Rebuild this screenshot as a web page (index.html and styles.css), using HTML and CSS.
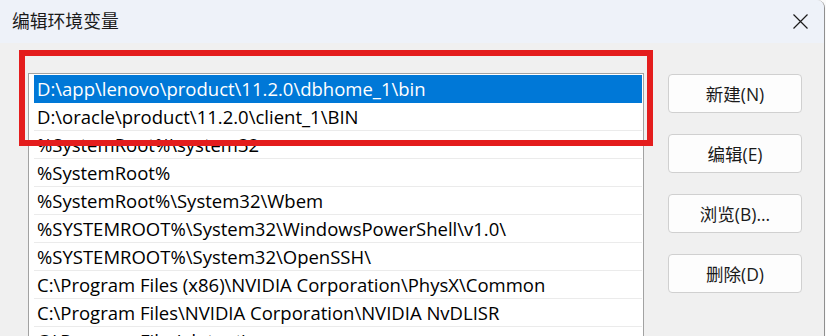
FILE: index.html
```
<!DOCTYPE html>
<html lang="zh-CN">
<head>
<meta charset="utf-8">
<title>编辑环境变量</title>
<link rel="stylesheet" href="styles.css">
</head>
<body>
<div class="window">
  <div class="titlebar">
    <span class="title">编辑环境变量</span>
    <span class="close" aria-label="关闭">
      <svg width="15" height="15" viewBox="0 0 15 15"><path d="M0.5 0.5 L14.5 14.5 M14.5 0.5 L0.5 14.5" stroke="#1b1b1b" stroke-width="1.2" fill="none"/></svg>
    </span>
  </div>
  <div class="content">
    <div class="list">
      <div class="row selected">D:\app\lenovo\product\11.2.0\dbhome_1\bin</div>
      <div class="row">D:\oracle\product\11.2.0\client_1\BIN</div>
      <div class="row">%SystemRoot%\system32</div>
      <div class="row">%SystemRoot%</div>
      <div class="row">%SystemRoot%\System32\Wbem</div>
      <div class="row">%SYSTEMROOT%\System32\WindowsPowerShell\v1.0\</div>
      <div class="row">%SYSTEMROOT%\System32\OpenSSH\</div>
      <div class="row">C:\Program Files (x86)\NVIDIA Corporation\PhysX\Common</div>
      <div class="row">C:\Program Files\NVIDIA Corporation\NVIDIA NvDLISR</div>
      <div class="row">C:\Program Files\dotnet\</div>
    </div>
    <div class="buttons">
      <button class="btn">新建(N)</button>
      <button class="btn">编辑(E)</button>
      <button class="btn">浏览(B)...</button>
      <button class="btn">删除(D)</button>
    </div>
    <div class="highlight"></div>
  </div>
</div>
</body>
</html>
```
FILE: styles.css
```
html, body {
  margin: 0;
  padding: 0;
  background: #fafafa;
}
body {
  width: 826px;
  height: 336px;
  overflow: hidden;
  font-family: "Open Sans", "Noto Sans CJK SC", sans-serif;
}
.window {
  width: 824px;
  height: 336px;
  background: #f0f0f0;
  border-right: 1px solid #8f8f8f;
  border-top-right-radius: 8px;
  overflow: hidden;
}
.titlebar {
  height: 43px;
  background: #eef2f9;
  display: flex;
  align-items: center;
  justify-content: space-between;
  padding: 0 16px 0 12px;
}
.title {
  font-family: "Noto Sans CJK SC", sans-serif;
  font-size: 17.8px;
  color: #1a1a1a;
  line-height: 1;
  margin-top: -1px;
}
.close {
  display: flex;
  width: 15px;
  height: 15px;
  margin-top: -1px;
}
.content {
  position: relative;
  display: flex;
  align-items: flex-start;
  padding: 30px 0 0 28px;
  gap: 24px;
}
.list {
  box-sizing: border-box;
  width: 616px;
  height: 300px;
  background: #ffffff;
  border: 1px solid #a2a2a2;
  padding: 1px 1px 0 5px;
}
.row {
  height: 27px;
  line-height: 27px;
  border-bottom: 1px solid #ebebeb;
  font-size: 18.5px;
  color: #000;
  padding-left: 3px;
  white-space: nowrap;
}
.row.selected {
  background: #0078d7;
  color: #fff;
  border-bottom-color: #0078d7;
}
.buttons {
  display: flex;
  flex-direction: column;
  gap: 21px;
  margin-top: 1px;
}
.btn {
  width: 134px;
  height: 39px;
  background: #fdfdfd;
  border: 1px solid #d0d0d0;
  border-radius: 4px;
  font-family: "Open Sans", "Noto Sans CJK SC", sans-serif;
  font-size: 17.5px;
  color: #1a1a1a;
  padding: 0;
}
.highlight {
  position: absolute;
  left: 19px;
  top: 7px;
  width: 622px;
  height: 84px;
  border: 6px solid #e41d1d;
  pointer-events: none;
}
```
